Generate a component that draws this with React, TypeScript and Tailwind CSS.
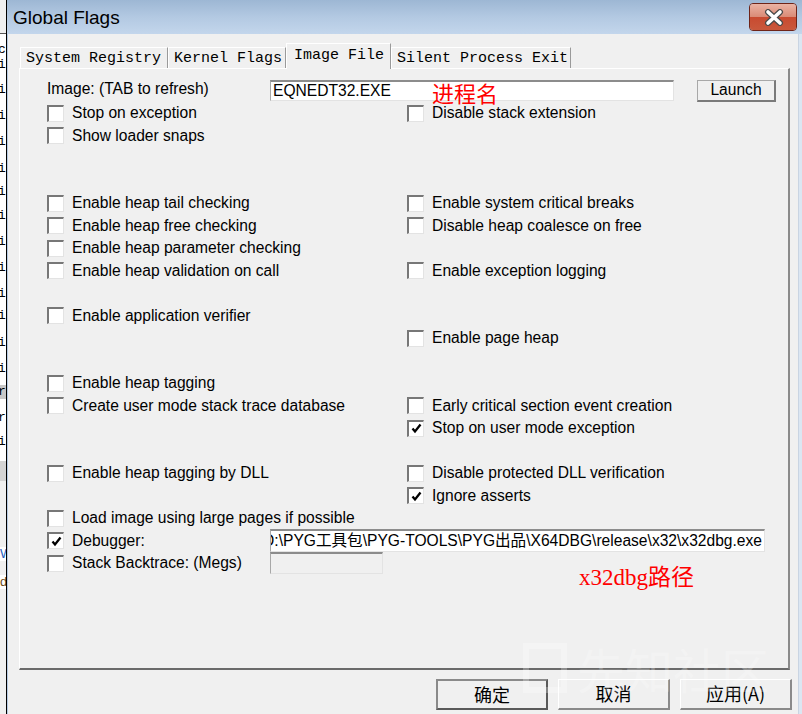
import React from 'react';

type Item = { label: string; checked?: boolean } | null;

// rows of the Image File page, 22.5px apart, left column / right column
const rows: [Item, Item][] = [
  [{ label: 'Stop on exception' }, { label: 'Disable stack extension' }],
  [{ label: 'Show loader snaps' }, null],
  [null, null],
  [null, null],
  [{ label: 'Enable heap tail checking' }, { label: 'Enable system critical breaks' }],
  [{ label: 'Enable heap free checking' }, { label: 'Disable heap coalesce on free' }],
  [{ label: 'Enable heap parameter checking' }, null],
  [{ label: 'Enable heap validation on call' }, { label: 'Enable exception logging' }],
  [null, null],
  [{ label: 'Enable application verifier' }, null],
  [null, { label: 'Enable page heap' }],
  [null, null],
  [{ label: 'Enable heap tagging' }, null],
  [{ label: 'Create user mode stack trace database' }, { label: 'Early critical section event creation' }],
  [null, { label: 'Stop on user mode exception', checked: true }],
  [null, null],
  [{ label: 'Enable heap tagging by DLL' }, { label: 'Disable protected DLL verification' }],
  [null, { label: 'Ignore asserts', checked: true }],
  [{ label: 'Load image using large pages if possible' }, null],
];

const tabs = [
  { label: 'System Registry', w: 'w-[148px]' },
  { label: 'Kernel Flags', w: 'w-[118px]' },
  { label: 'Image File', w: 'w-[105px]', active: true },
  { label: 'Silent Process Exit', w: 'w-[180px]' },
];

// bits of the window lying behind the dialog (left edge)
const behind = [
  { top: 44, text: 'ce' },
  { top: 59, text: 'i' },
  { top: 84, text: 'i' },
  { top: 110, text: 'i' },
  { top: 136, text: 'i' },
  { top: 163, text: 'i' },
  { top: 186, text: 'i' },
  { top: 210, text: 'i' },
  { top: 236, text: 'i' },
  { top: 262, text: 'i' },
  { top: 288, text: 'i' },
  { top: 310, text: 'i' },
  { top: 337, text: 'i' },
  { top: 363, text: 'i' },
  { top: 386, text: 'r', grey: true },
  { top: 412, text: 'r' },
  { top: 436, text: 'i' },
];

function Box({ checked }: { checked?: boolean }) {
  return (
    <span className="w-[17px] h-[17px] shrink-0 bg-white border-t-2 border-l-2 border-b border-r border-t-[#777] border-l-[#777] border-b-[#e3e3e3] border-r-[#e3e3e3] flex items-center justify-center">
      {checked && (
        <svg width="11" height="11" viewBox="0 0 11 11">
          <path d="M1.5 5.5 L4 8.5 L9.5 1.5" stroke="#000" strokeWidth="2.3" fill="none" />
        </svg>
      )}
    </span>
  );
}

function Check({ item }: { item: Item }) {
  if (!item) return <div />;
  return (
    <div className="flex items-center gap-[8px]">
      <Box checked={item.checked} />
      <span className="whitespace-nowrap">{item.label}</span>
    </div>
  );
}

function BehindStrip() {
  let y = 35;
  return (
    <div className="w-[6px] shrink-0 flex flex-col overflow-hidden bg-white font-['Liberation_Mono',monospace] text-[13px] leading-[14px] text-black">
      <div className="h-[34px] shrink-0 bg-[#f0f0f0] border-b border-[#555]" />
      {behind.map((b, i) => {
        const gap = b.top - y;
        y = b.top + 14;
        return (
          <React.Fragment key={i}>
            <div className="shrink-0" style={{ height: gap }} />
            <div className={`h-[14px] shrink-0 whitespace-nowrap -ml-[2px] ${b.grey ? 'bg-[#c8c8c8]' : ''}`}>{b.text}</div>
          </React.Fragment>
        );
      })}
      <div className="h-[12px] shrink-0" />
      <div className="h-[20px] shrink-0 bg-[#d4d4d4]" />
      <div className="h-[66px] shrink-0 bg-[#f0f0f0]" />
      <div className="h-[14px] shrink-0 text-[#1f5fbf] font-['Liberation_Sans',sans-serif]">W</div>
      <div className="h-[14px] shrink-0 bg-[#f0f0f0]" />
      <div className="h-[14px] shrink-0 text-[#6b4a1a] font-['Liberation_Sans',sans-serif]">d</div>
      <div className="flex-1 bg-[#f0f0f0]" />
    </div>
  );
}

function CloseButton() {
  return (
    <div className="w-[48px] h-[28px] rounded-[4px] border border-[#6e2418] overflow-hidden flex flex-col relative">
      <div className="h-[13px] bg-gradient-to-b from-[#eab3a4] to-[#d98a76]" />
      <div className="flex-1 bg-gradient-to-b from-[#c84a30] to-[#c9583c]" />
      <svg className="absolute left-[14px] top-[5px]" width="20" height="17" viewBox="0 0 20 17">
        <path d="M4 3 L16 14 M16 3 L4 14" stroke="#4a4a4a" strokeWidth="6" strokeLinecap="round" />
        <path d="M4 3 L16 14 M16 3 L4 14" stroke="#fff" strokeWidth="3.6" strokeLinecap="round" />
      </svg>
    </div>
  );
}

function TextBox({ className, children }: { className: string; children?: React.ReactNode }) {
  return (
    <div className={`border-t-2 border-l border-b border-r border-t-[#8c8c8c] border-l-[#a8a8a8] border-b-[#e3e3e3] border-r-[#e3e3e3] flex items-center overflow-hidden whitespace-nowrap ${className}`}>
      {children}
    </div>
  );
}

function DialogButton({ label, primary }: { label: string; primary?: boolean }) {
  return (
    <button
      className={`w-[112px] h-[31px] bg-[#f0f0f0] flex items-center justify-center pb-[2px] text-[18px] text-black font-['Noto_Sans_CJK_SC','Liberation_Serif',serif] ${
        primary
          ? 'border-2 border-t-[#8a8a8a] border-l-[#8a8a8a] border-b-[#5a5a5a] border-r-[#5a5a5a]'
          : 'border-t border-l border-white border-b-2 border-r-2 border-b-[#8a8a8a] border-r-[#8a8a8a]'
      }`}
    >
      {label}
    </button>
  );
}

export default function App() {
  return (
    <div className="w-[802px] h-[714px] flex overflow-hidden bg-[#f0f0f0] font-['Liberation_Sans','Noto_Sans_CJK_SC',sans-serif] text-[15.6px] leading-none text-black">
      <BehindStrip />
      <div className="w-px shrink-0 bg-black" />

      {/* dialog */}
      <div className="flex-1 flex flex-col relative">
        {/* title bar */}
        <div className="h-[34px] shrink-0 flex items-center justify-between pl-[6px] pr-[5px] bg-gradient-to-b from-[#9db7d4] via-[#b3c9e2] to-[#c3d6ec]">
          <span className="text-[19px] text-black">Global Flags</span>
          <CloseButton />
        </div>

        <div className="flex-1 flex">
          <div className="w-px bg-[#b7cbe3]" />
          <div className="flex-1 flex flex-col pl-[11px] pr-[8px] bg-[#f0f0f0]">
            {/* tabs */}
            <div className="h-[34px] shrink-0 flex items-end pl-px font-['Liberation_Mono',monospace] text-[15px]">
              {tabs.map((t) =>
                t.active ? (
                  <div
                    key={t.label}
                    className={`${t.w} h-[26px] -mb-px relative z-10 bg-[#f0f0f0] border-l border-t border-white border-r border-r-[#9a9a9a] flex items-center pl-[7px] pb-[2px]`}
                  >
                    {t.label}
                  </div>
                ) : (
                  <div
                    key={t.label}
                    className={`${t.w} h-[21px] border-l border-t border-white border-r border-r-[#9a9a9a] flex items-center pl-[5px]`}
                  >
                    {t.label}
                  </div>
                )
              )}
            </div>

            {/* tab page */}
            <div className="w-[771px] h-[602px] shrink-0 relative border-t border-l border-white border-r-2 border-b-2 border-r-[#8a8a8a] border-b-[#6a6a6a] pl-[27px] pt-[10px]">
              <div className="h-[23px] flex items-center">
                <span className="w-[223px] shrink-0 -mt-[3px]">Image: (TAB to refresh)</span>
                <TextBox className="w-[404px] h-[21px] bg-white pl-[2px]">EQNEDT32.EXE</TextBox>
                <button className="ml-[23px] w-[79px] h-[22px] bg-[#f0f0f0] border border-[#a8a8a8] border-b-2 border-r-2 border-b-[#7a7a7a] border-r-[#7a7a7a] flex items-center justify-center">
                  Launch
                </button>
              </div>

              {rows.map(([l, r], i) => (
                <div key={i} className="grid grid-cols-[360px_1fr] h-[22.5px] items-center">
                  <Check item={l} />
                  <Check item={r} />
                </div>
              ))}

              <div className="h-[22.5px] flex items-center">
                <Box checked />
                <span className="ml-[8px] w-[198px] shrink-0">Debugger:</span>
                <TextBox className="w-[495px] h-[23px] bg-white justify-end pr-[2px]">
                  <span>D:\PYG工具包\PYG-TOOLS\PYG出品\X64DBG\release\x32\x32dbg.exe</span>
                </TextBox>
              </div>
              <div className="h-[22.5px] flex items-center">
                <Box />
                <span className="ml-[8px] w-[198px] shrink-0">Stack Backtrace: (Megs)</span>
                <TextBox className="w-[113px] h-[22px] bg-[#f0f0f0]" />
              </div>

              {/* red notes pasted on the screenshot */}
              <span className="absolute left-[412px] top-[15px] text-[22px] leading-none text-[#ff0000] font-['Liberation_Serif','Noto_Sans_CJK_SC',serif]">
                进程名
              </span>
              <span className="absolute left-[559px] top-[497px] text-[23px] leading-none text-[#ff0000] font-['Liberation_Serif','Noto_Sans_CJK_SC',serif]">
                x32dbg路径
              </span>
            </div>

            {/* buttons */}
            <div className="flex-1 flex justify-end items-start gap-[10px] pt-[9px] -mr-[2px]">
              <DialogButton label="确定" primary />
              <DialogButton label="取消" />
              <DialogButton label="应用(A)" />
            </div>
          </div>
          <div className="w-px bg-[#c9d4e2]" />
          <div className="w-[3px] bg-[#dbe6f2]" />
        </div>

        {/* faint watermark */}
        <div className="absolute left-[516px] top-[643px] flex items-center gap-[10px] text-[48px] leading-none text-white/25 font-['Noto_Sans_CJK_SC',sans-serif] pointer-events-none">
          <span className="w-[44px] h-[50px] border-[6px] border-white/25" />
          <span>先知社区</span>
        </div>
      </div>
    </div>
  );
}
